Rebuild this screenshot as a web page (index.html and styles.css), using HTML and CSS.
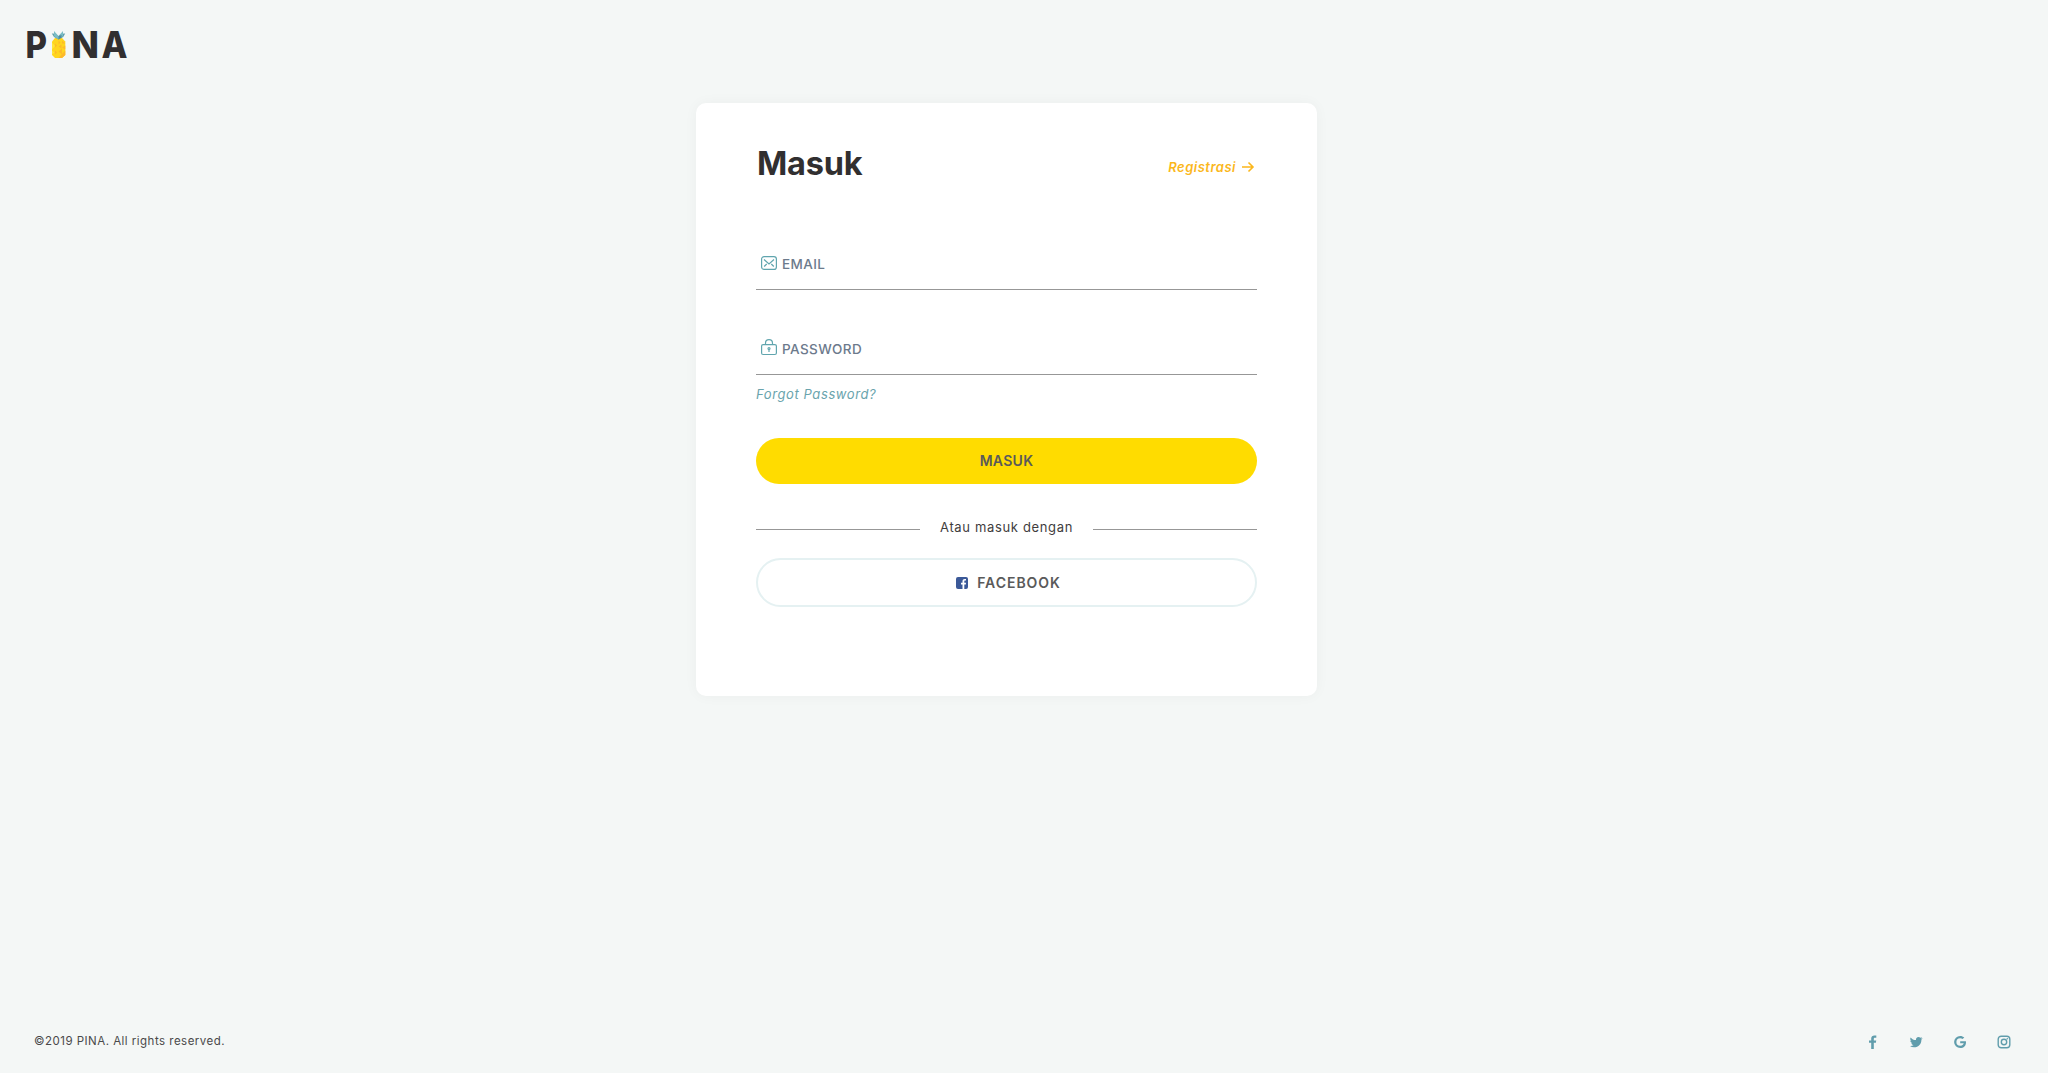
FILE: index.html
```html
<!DOCTYPE html>
<html lang="id">
<head>
<meta charset="utf-8">
<title>PINA</title>
<link rel="stylesheet" href="styles.css">
</head>
<body>
<header class="header">
  <svg class="logo" viewBox="0 0 102 28" role="img" aria-label="PINA">
    <g class="logo-text">
      <text x="-0.5" y="26.8" textLength="21.500" lengthAdjust="spacingAndGlyphs">P</text>
      <text x="45.500" y="26.8" textLength="27.500" lengthAdjust="spacingAndGlyphs">N</text>
      <text x="75.500" y="26.8" textLength="26" lengthAdjust="spacingAndGlyphs">A</text>
    </g>
    <g transform="translate(1 -.5)">
      <path fill="#ffd51e" d="M28 7.500h7l3.300 3.500v13.500L35 27.500h-7l-3-3V11z"/>
      <path fill="#fdb92b" d="M31.500 10l2 2-2 2zM35 10l3.300 3H35zM31.500 16l3-2v4zM38.300 15v4L35 17zM31.500 21l3.500-3v6zM38.300 20v4.500L35 27.500h-3.500l3.500-4zM28 13l2 2-2 2zM28 20l2 2-2 2z"/>
      <path fill="#ffe53b" d="M25 12l3 3.500-3 3.500zM25 20l2.500 2-2.500 2z"/>
      <path fill="#60a0ae" d="M31.500 9L27 6.500 24.800 3l4 .2L31.500 6l2.500-2.800 4.200-.2-2 3.500z"/>
      <path fill="#79bcc5" d="M27 .5l4.500 5L36 .5v5L31.500 9 27 5.500z"/>
      <path fill="#4f8b9b" d="M31.500 5.500l3-1v2.500L31.500 9z"/>
    </g>
  </svg>
</header>
<main class="card">
  <div class="card-head">
    <h1 class="title">Masuk</h1>
    <a class="register"><span>Registrasi</span>
      <svg class="arrow" viewBox="0 0 12 10"><path d="M0 5h11M6.500.5L11 5 6.500 9.500"/></svg>
    </a>
  </div>
  <div class="field">
    <svg class="field-icon" viewBox="0 0 16 16"><rect x=".6" y="1.600" width="14.800" height="12.800" rx="2.500"/><path d="M3 4.500l5 4.500 5-4.500M3.200 11.500l2.500-2.500M12.800 11.500l-2.500-2.500"/></svg>
    <span>EMAIL</span>
  </div>
  <div class="field field-password">
    <svg class="field-icon" viewBox="0 0 16 16"><rect x=".6" y="4.600" width="14.800" height="9.900" rx="1.500"/><path d="M4.500 4.600V3.200a3.500 3.500 0 0 1 7 0v1.400"/><circle cx="8" cy="8.500" r="1"/><path d="M8 9v3"/></svg>
    <span>PASSWORD</span>
  </div>
  <a class="forgot">Forgot Password?</a>
  <button class="btn btn-primary">MASUK</button>
  <div class="divider"><span>Atau masuk dengan</span></div>
  <button class="btn btn-outline">
    <svg class="fb" viewBox="0 0 12 12"><rect width="12" height="12" rx="2" fill="#3b5998"/><path fill="#fff" d="M6.500 12V7.500H5V5.700h1.500V4.300C6.500 2.700 7.400 2 8.800 2H10v1.600h-.8c-.7 0-.9.300-.9.900v1.200H10l-.2 1.800H8.300V12z"/></svg>
    <span>FACEBOOK</span>
  </button>
</main>
<footer class="footer">
  <p class="copy">©2019 PINA. All rights reserved.</p>
  <nav class="social">
    <svg viewBox="0 0 14 14"><path d="M6.200 14V7.800H4V5.400h2.200V3.600C6.200 1.500 7.500.4 9.400.4c.9 0 1.600.1 1.900.1v2.200H10c-1 0-1.200.5-1.200 1.200v1.500h2.400l-.3 2.400H8.800V14z"/></svg>
    <svg viewBox="0 0 14 14"><path d="M13.700 3.200c-.4.600-.8 1-1.300 1.400v.3c0 3.500-2.600 7.400-7.400 7.400-1.500 0-2.900-.4-4-1.200 1.400.1 2.700-.3 3.700-1.100-1.100 0-2-.8-2.400-1.800.4.1.8 0 1.100-.1C2.200 7.900 1.300 6.900 1.300 5.600c.4.200.8.300 1.200.300C1.300 5.100.9 3.600 1.600 2.400c1.300 1.600 3.200 2.600 5.400 2.700C6.600 3.400 7.900 1.900 9.500 1.900c.8 0 1.400.3 1.900.8.600-.1 1.200-.3 1.700-.6-.2.600-.6 1.100-1.100 1.400.6-.1 1.100-.2 1.700-.3z"/></svg>
    <svg viewBox="0 0 14 14"><path d="M7.200 6.200h5.700c.1.300.1.700.1 1 0 3.500-2.300 5.900-5.800 5.900A6.100 6.100 0 0 1 7.200.9c1.600 0 3 .6 4.100 1.600L9.600 4.100C9 3.500 8.200 3.200 7.200 3.200a3.800 3.800 0 0 0 0 7.600c2.600 0 3.300-1.700 3.500-2.500H7.200z"/></svg>
    <svg viewBox="0 0 14 14"><rect class="line" x="1.200" y="1.200" width="11.600" height="11.600" rx="3"/><circle class="line" cx="7" cy="7" r="2.700"/><circle cx="10.300" cy="3.700" r=".8"/></svg>
  </nav>
</footer>
</body>
</html>
```
FILE: styles.css
```css
* { box-sizing: border-box; }
body {
  margin: 0;
  min-height: 1073px;
  display: flex;
  flex-direction: column;
  background: #f4f7f6;
  color: #312f30;
  font-family: Inter, "Liberation Sans", sans-serif;
}
svg { flex: none; display: block; }
.header { height: 103px; padding: 31px 26px; }
.logo { width: 102px; height: 28px; overflow: visible; }
.logo-text { font-size: 37px; font-weight: 800; fill: #312f30; }
.card {
  width: 621px;
  height: 593px;
  margin-left: 696px;
  padding: 40px 60px 0;
  border-radius: 10px;
  background: #fff;
  box-shadow: 0 0 14px rgba(0, 0, 0, .04);
  display: flex;
  flex-direction: column;
}
.card-head { display: flex; justify-content: space-between; height: 98px; }
.title {
  margin: 0;
  padding-left: 1px;
  font-size: 32.500px;
  line-height: 41px;
  font-weight: 700;
  letter-spacing: -.2px;
}
.register {
  display: flex;
  align-items: center;
  gap: 6px;
  height: 47px;
  padding-right: 3px;
  color: #fbb71c;
  font-size: 13px;
  font-style: italic;
  font-weight: 600;
  letter-spacing: .5px;
}
.arrow { width: 12px; height: 10px; fill: none; stroke: currentColor; stroke-width: 1.600; overflow: visible; }
.field {
  display: flex;
  align-items: center;
  gap: 5px;
  height: 49px;
  padding: 0 5px 4px;
  border-bottom: 1px solid #979797;
  color: #6c7a8c;
  font-size: 13.500px;
  font-weight: 500;
  letter-spacing: .4px;
}
.field span { padding-top: 1px; }
.field-password { margin-top: 36px; }
.field-icon { width: 16px; height: 16px; fill: none; stroke: #60a5ae; stroke-width: 1.200; overflow: visible; }
.forgot {
  height: 63px;
  padding-top: 8px;
  color: #6aa4ad;
  font-size: 13px;
  line-height: 22px;
  font-style: italic;
  letter-spacing: .6px;
}
.btn {
  display: flex;
  align-items: center;
  justify-content: center;
  flex: none;
  border-radius: 25px;
  color: #5a5a5a;
  font: inherit;
  font-size: 14px;
  font-weight: 600;
  letter-spacing: .3px;
}
.btn-primary { height: 46px; padding: 0 0 1px; border: 0; background: #ffdc00; }
.divider {
  display: flex;
  align-items: center;
  gap: 20px;
  height: 20px;
  margin: 35px 0 19px;
  color: #3f3d3e;
  font-size: 13px;
  letter-spacing: .65px;
}
.divider span { padding-bottom: 4px; }
.divider::before, .divider::after { content: ""; flex: 1; height: 1px; background: #979797; }
.btn-outline {
  gap: 9px;
  height: 49px;
  padding: 0 0 0 4px;
  border: 2px solid #e5f1f2;
  background: #fff;
  letter-spacing: .95px;
}
.fb { width: 12px; height: 12px; }
.footer {
  display: flex;
  justify-content: space-between;
  align-items: center;
  margin-top: auto;
  height: 64px;
  padding: 0 37px 0 34px;
}
.copy { margin: 0; font-size: 11.500px; letter-spacing: .48px; color: #4a494a; }
.social { display: flex; gap: 30px; padding-top: 2px; }
.social svg { width: 14px; height: 14px; fill: #609dac; }
.social .line { fill: none; stroke: #609dac; stroke-width: 1.400; }
```
